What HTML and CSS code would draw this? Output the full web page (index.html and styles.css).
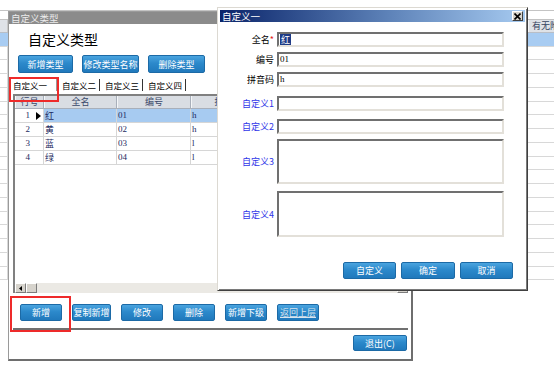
FILE: index.html
```html
<!DOCTYPE html>
<html lang="zh-CN">
<head>
<meta charset="utf-8">
<title>自定义类型</title>
<link rel="stylesheet" href="styles.css">
</head>
<body>
<div class="desk">
  <div class="bg-grid">
    <div class="bg-top"></div>
    <div class="bg-head"><span class="bg-head-first"></span><span class="bg-head-gap"></span><span class="bg-head-cell">有无附件</span></div>
    <div class="bg-row sel"></div>
    <div class="bg-row"></div><div class="bg-row"></div><div class="bg-row"></div><div class="bg-row"></div>
    <div class="bg-row"></div><div class="bg-row"></div><div class="bg-row"></div><div class="bg-row"></div>
    <div class="bg-row"></div><div class="bg-row"></div><div class="bg-row"></div><div class="bg-row"></div>
    <div class="bg-row"></div><div class="bg-row"></div><div class="bg-row"></div><div class="bg-row"></div>
    <div class="bg-row"></div>
  </div>

  <section class="main-win">
    <div class="win-title">自定义类型</div>
    <h1 class="heading">自定义类型</h1>
    <div class="type-btns">
      <button class="btn tb-a">新增类型</button>
      <button class="btn tb-b">修改类型名称</button>
      <button class="btn tb-b">删除类型</button>
    </div>
    <div class="tabs">
      <span class="tab active">自定义一</span>
      <span class="tab">自定义二</span>
      <span class="tab">自定义三</span>
      <span class="tab">自定义四</span>
    </div>
    <div class="grid">
      <div class="grid-head">
        <span class="cell c1">行号</span><span class="cell c2">全名</span><span class="cell c3">编号</span><span class="cell c4">拼音码</span><span class="cell c5"></span>
      </div>
      <div class="grid-row sel">
        <span class="cell c1 num">1<i class="ind"><svg width="5" height="8" viewBox="0 0 5 8"><path d="M0 0 L5 4 L0 8 Z" fill="#000"/></svg></i></span><span class="cell c2">红</span><span class="cell c3 code">01</span><span class="cell c4 code">h</span><span class="cell c5"></span>
      </div>
      <div class="grid-row">
        <span class="cell c1 num">2<i class="ind"></i></span><span class="cell c2">黄</span><span class="cell c3 code">02</span><span class="cell c4 code">h</span><span class="cell c5"></span>
      </div>
      <div class="grid-row">
        <span class="cell c1 num">3<i class="ind"></i></span><span class="cell c2">蓝</span><span class="cell c3 code">03</span><span class="cell c4 code">l</span><span class="cell c5"></span>
      </div>
      <div class="grid-row">
        <span class="cell c1 num">4<i class="ind"></i></span><span class="cell c2">绿</span><span class="cell c3 code">04</span><span class="cell c4 code">l</span><span class="cell c5"></span>
      </div>
      <div class="grid-fill"></div>
      <div class="hscroll">
        <span class="sb-btn"><svg width="3" height="5" viewBox="0 0 3 5"><path d="M3 0 L0 2.5 L3 5 Z" fill="#000"/></svg></span>
        <span class="sb-thumb"></span>
        <span class="sb-track"></span>
        <span class="sb-btn"><svg width="3" height="5" viewBox="0 0 3 5"><path d="M0 0 L3 2.5 L0 5 Z" fill="#000"/></svg></span>
      </div>
    </div>
    <div class="action-panel">
      <button class="btn ab">新增</button>
      <button class="btn ab narrow">复制新增</button>
      <button class="btn ab">修改</button>
      <button class="btn ab">删除</button>
      <button class="btn ab">新增下级</button>
      <button class="btn ab back">返回上层</button>
    </div>
    <div class="footer">
      <button class="btn exit">退出(C)</button>
    </div>
  </section>

  <div class="mark mark-tab"></div>
  <div class="mark mark-add"></div>

  <section class="dialog">
    <div class="dlg-title">
      <span>自定义一</span>
      <span class="close"><svg width="7" height="7" viewBox="0 0 7 7"><path d="M0.5 0.5 L6.5 6.5 M6.5 0.5 L0.5 6.5" stroke="#000" stroke-width="1.6"/></svg></span>
    </div>
    <div class="dlg-body">
      <div class="frow">
        <label class="lbl">全名<em class="req">*</em></label>
        <div class="field"><span class="selected">红</span></div>
      </div>
      <div class="frow g5">
        <label class="lbl">编号</label>
        <div class="field">01</div>
      </div>
      <div class="frow g5">
        <label class="lbl">拼音码</label>
        <div class="field">h</div>
      </div>
      <div class="frow g9">
        <label class="lbl blue">自定义1</label>
        <div class="field"></div>
      </div>
      <div class="frow g8">
        <label class="lbl blue">自定义2</label>
        <div class="field"></div>
      </div>
      <div class="frow g5 tall">
        <label class="lbl blue">自定义3</label>
        <div class="field area"></div>
      </div>
      <div class="frow g7 tall2">
        <label class="lbl blue">自定义4</label>
        <div class="field area"></div>
      </div>
      <div class="dlg-btns">
        <button class="btn db">自定义</button>
        <button class="btn db wide">确定</button>
        <button class="btn db">取消</button>
      </div>
    </div>
  </section>
</div>
</body>
</html>
```

FILE: styles.css
```css
* { box-sizing: border-box; }
html, body { margin: 0; padding: 0; }
body {
  width: 554px;
  height: 369px;
  overflow: hidden;
  background: #fff;
  font-family: "Noto Sans CJK SC", "Noto Sans", sans-serif;
  font-size: 9px;
  color: #000;
}
.desk { position: relative; width: 554px; height: 369px; overflow: hidden; }

/* background grid */
.bg-grid {
  position: absolute;
  left: 0;
  top: 0;
  width: 554px;
  display: flex;
  flex-direction: column;
}
.bg-top { height: 11px; border-bottom: 1px solid #c4c4c4; margin-bottom: 8px; }
.bg-head {
  height: 14px;
  display: flex;
  background: #dfe2e7;
  border-top: 1px solid #c2c2c2;
  border-bottom: 1px solid #b9bec6;
}
.bg-head-first { width: 8px; flex-shrink: 0; border-right: 1px solid #c8c8c8; }
.bg-head-gap { width: 520px; flex-shrink: 0; }
.bg-head-cell {
  flex: 1;
  min-width: 0;
  overflow: hidden;
  padding-left: 3px;
  line-height: 12px;
  color: #34425f;
  white-space: nowrap;
  border-left: 1px solid #f6f7f9;
}
.bg-row {
  height: 14px;
  border-bottom: 1px solid #d8d8d8;
  background: linear-gradient(to right, transparent 7px, #d8d8d8 7px, #d8d8d8 8px, transparent 8px);
}
.bg-row:nth-child(4n) { height: 13px; }
.bg-row.sel { background: #a8ccf2; height: 14px; }

/* main window */
.main-win {
  position: absolute;
  left: 8px;
  top: 11px;
  width: 405px;
  height: 350px;
  background: #fff;
  border-left: 1px solid #9a9a9a;
  border-top: 1px solid #9a9a9a;
  border-right: 2px solid #6e6e6e;
  border-bottom: 2px solid #6e6e6e;
  display: flex;
  flex-direction: column;
}
.win-title {
  height: 12px;
  line-height: 12px;
  background: #8b8b8b;
  color: #ececec;
  padding-left: 2px;
  font-size: 9.5px;
  white-space: nowrap;
}
.heading {
  margin: 6px 0 0 19px;
  height: 18px;
  line-height: 18px;
  font-size: 14px;
  font-weight: normal;
}
.type-btns {
  margin-top: 7px;
  padding-left: 9px;
  display: flex;
  gap: 9px;
  height: 18px;
}
.btn {
  font-family: inherit;
  font-size: 9px;
  color: #fff;
  padding: 0;
  margin: 0;
  border: 1px solid #1c6aa6;
  border-radius: 2px;
  background: linear-gradient(#4aa4df, #2c89cb 45%, #2079bc);
  white-space: nowrap;
  overflow: hidden;
  line-height: 1;
  display: flex;
  align-items: center;
  justify-content: center;
}
.tb-a { width: 55px; height: 18px; }
.tb-b { width: 57px; height: 18px; }

.tabs {
  margin-top: 3px;
  height: 18px;
  padding-left: 3px;
  display: flex;
  align-items: flex-end;
}
.tab {
  height: 12px;
  margin-bottom: 3px;
  line-height: 12px;
  padding: 0 3px 0 5px;
  font-size: 8.5px;
  border-right: 1px solid #333;
  white-space: nowrap;
}
.tab.active {
  padding: 0 9px 0 1px;
  border-right-color: #9a9a9a;
}

.grid {
  margin: 0 3px 0 4px;
  height: 199px;
  border-top: 2px solid #808080;
  border-left: 2px solid #808080;
  display: flex;
  flex-direction: column;
  overflow: hidden;
  background: #fff;
}
.grid-head, .grid-row { display: flex; flex-shrink: 0; }
.grid-head {
  height: 13px;
  border-bottom: 1px solid #a8afba;
}
.grid-head .cell {
  background: #d9dde3;
  border-left: 1px solid #f4f6f8;
  border-right: 1px solid #a8afba;
  color: #3a486a;
  text-align: center;
  line-height: 12px;
}
.cell { white-space: nowrap; overflow: hidden; flex-shrink: 0; }
.c1 { width: 29px; }
.c2 { width: 73px; }
.c3 { width: 74px; }
.c4 { width: 74px; }
.c5 { flex: 1; }
.grid-row { height: 14px; }
.grid-row .cell {
  border-right: 1px solid #d6d6d6;
  border-bottom: 1px solid #d6d6d6;
  line-height: 13px;
  padding-left: 1px;
  color: #1d2a60;
}
.grid-row.sel .c2, .grid-row.sel .c3, .grid-row.sel .c4, .grid-row.sel .c5 { background: #a7cbf1; }
.grid-row .num {
  display: flex;
  justify-content: flex-end;
  align-items: center;
  padding: 0;
  font-family: "Liberation Serif", serif;
  font-size: 9px;
}
.ind {
  width: 13px;
  height: 13px;
  display: flex;
  align-items: center;
  justify-content: flex-end;
  padding-right: 2px;
}
.code { font-family: "Liberation Serif", serif; font-size: 9px; }
.grid-fill { flex: 1; }
.hscroll {
  height: 10px;
  display: flex;
  background: #ebe9e4;
  flex-shrink: 0;
}
.sb-btn, .sb-thumb {
  width: 11px;
  height: 10px;
  background: #d6d3cc;
  border-top: 1px solid #fff;
  border-left: 1px solid #fff;
  border-right: 1px solid #7c7c7c;
  border-bottom: 1px solid #7c7c7c;
  display: flex;
  align-items: center;
  justify-content: center;
}
.sb-track { flex: 1; }

.action-panel {
  margin: 0 3px 0 4px;
  height: 37px;
  padding: 11px 0 0 7px;
  border-bottom: 2px solid #707070;
  display: flex;
  align-items: flex-start;
  gap: 10px;
}
.ab { width: 42px; height: 17px; }
.ab.narrow { width: 39px; }
.ab.back { color: #d8e4ee; text-decoration: underline; }

.footer {
  flex: 1;
  display: flex;
  justify-content: flex-end;
  align-items: flex-start;
  padding: 5px 4px 0 0;
}
.exit { width: 54px; height: 16px; }

/* annotation marks */
.mark {
  position: absolute;
  border: 2px solid #ee2a2a;
}
.mark-tab { left: 9px; top: 77px; width: 50px; height: 25px; }
.mark-add { left: 10px; top: 296px; width: 61px; height: 36px; }

/* dialog */
.dialog {
  position: absolute;
  left: 217px;
  top: 7px;
  width: 311px;
  height: 284px;
  background: #fff;
  border: 1px solid;
  border-color: #dcd9d2 #404040 #404040 #dcd9d2;
  box-shadow: inset 1px 1px 0 #fff, inset -1px -1px 0 #7a7a7a;
  padding: 2px;
  display: flex;
  flex-direction: column;
}
.dlg-title {
  height: 12px;
  line-height: 12px;
  background: linear-gradient(to right, #0a246a, #5d82b8 55%, #a6caf0);
  color: #fff;
  font-size: 9.5px;
  padding-left: 2px;
  display: flex;
  justify-content: space-between;
  align-items: center;
}
.close {
  width: 11px;
  height: 10px;
  margin-right: 2px;
  background: #d6d3cc;
  border-top: 1px solid #fff;
  border-left: 1px solid #fff;
  border-right: 1px solid #404040;
  border-bottom: 1px solid #404040;
  display: flex;
  align-items: center;
  justify-content: center;
}
.dlg-body {
  padding-top: 10px;
  display: flex;
  flex-direction: column;
}
.frow {
  display: flex;
  align-items: center;
  height: 15px;
}
.frow.g5 { margin-top: 5px; }
.frow.g7 { margin-top: 7px; }
.frow.g8 { margin-top: 8px; }
.frow.g9 { margin-top: 9px; }
.frow.tall { height: 45px; }
.frow.tall2 { height: 46px; }
.lbl {
  width: 57px;
  padding-right: 3px;
  text-align: right;
  font-size: 9px;
  white-space: nowrap;
}
.lbl.blue { color: #2f36e8; }
.req { font-style: normal; color: #e21b1b; }
.field {
  width: 227px;
  height: 15px;
  border-style: solid;
  border-width: 2px;
  border-color: #707070 #e3e0d9 #e3e0d9 #707070;
  background: #fff;
  font-family: "Liberation Serif", serif;
  font-size: 9px;
  line-height: 11px;
  padding-left: 1px;
  color: #000;
}
.field.area { height: 100%; }
.selected {
  display: inline-block;
  background: #1d3b86;
  color: #fff;
  font-family: "Noto Sans CJK SC", sans-serif;
  line-height: 11px;
  padding: 0 1px;
}
.dlg-btns {
  margin-top: 25px;
  padding-right: 12px;
  display: flex;
  justify-content: flex-end;
  gap: 5px;
}
.db { width: 53px; height: 17px; }
.db.wide { width: 54px; }
```
